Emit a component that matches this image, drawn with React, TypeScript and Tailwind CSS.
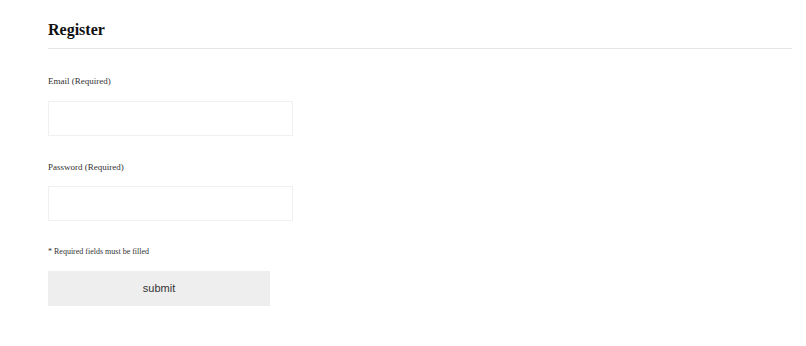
import React from 'react';

function App() {
  const serif = { fontFamily: '"Liberation Serif", "Times New Roman", serif' };
  return (
    <div className="min-h-screen bg-white pl-12 pr-[14px] pt-5" style={serif}>
      {/* Heading */}
      <h2 className="text-[16px] leading-[20px] font-bold text-[#111] pb-2 border-b border-[#e6e6e6]">
        Register
      </h2>

      <form className="pt-[26px]" onSubmit={(e) => e.preventDefault()}>
        <label className="block text-[9px] leading-[12px] text-[#333]">Email (Required)</label>
        <input
          type="email"
          className="block mt-[14px] w-[245px] h-[35px] border border-[#f0f0f0] bg-white outline-none"
        />

        <label className="block mt-[25px] text-[9px] leading-[12px] text-[#333]">Password (Required)</label>
        <input
          type="password"
          className="block mt-[13px] w-[245px] h-[35px] border border-[#f0f0f0] bg-white outline-none"
        />

        <p className="mt-[25px] text-[8px] leading-[12px] text-[#333]">* Required fields must be filled</p>

        <button
          type="submit"
          className="block mt-[13px] w-[222px] h-[35px] bg-[#eeeeee] text-[11px] text-[#333]"
          style={{ fontFamily: '"Liberation Sans", Arial, sans-serif' }}
        >
          submit
        </button>
      </form>
    </div>
  );
}

export default App;
